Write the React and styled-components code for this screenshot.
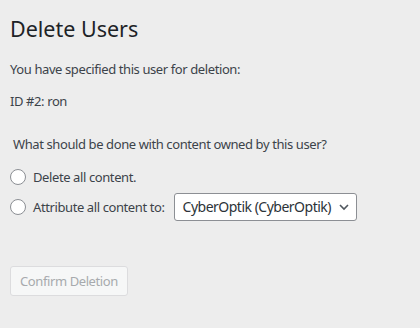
import React from 'react';
import styled, { createGlobalStyle } from 'styled-components';

const Global = createGlobalStyle`
  body {
    margin: 0;
    background: #ededed;
    font-family: "Noto Sans", "Open Sans", sans-serif;
    color: #3c434a;
  }
`;

const Wrap = styled.div`
  padding: 14px 10px 0 10px;
  width: 420px;
  height: 328px;
  box-sizing: border-box;
`;

const Title = styled.h1`
  font-size: 21.5px;
  font-weight: 400;
  color: #1d2327;
  margin: 0 0 16px 0;
  line-height: 30px;
`;

const Text = styled.p`
  font-size: 13px;
  letter-spacing: -0.4px;
  margin: 0 0 ${p => p.gap || 16}px ${p => p.indent || 0}px;
  line-height: 1.5;
`;

const Options = styled.div`
  display: flex;
  flex-direction: column;
  gap: 6px;
`;

const Row = styled.label`
  display: flex;
  align-items: center;
  gap: 7px;
  font-size: 13px;
  letter-spacing: -0.4px;
  height: ${p => p.tall ? 28 : 20}px;
`;

const Radio = styled.span`
  width: 16px;
  height: 16px;
  border: 1px solid #8c8f94;
  border-radius: 50%;
  background: #fff;
  box-sizing: border-box;
  flex: none;
`;

const Select = styled.div`
  display: flex;
  align-items: center;
  gap: 7px;
  height: 28px;
  box-sizing: border-box;
  border: 1px solid #8c8f94;
  border-radius: 3px;
  background: #fff;
  padding: 0 6px 0 8px;
  font-size: 14px;
  letter-spacing: -0.5px;
  color: #2c3338;
  margin-left: 2px;
`;

const Button = styled.button`
  margin-top: 45px;
  height: 30px;
  padding: 0 9px;
  font-family: inherit;
  font-size: 13px;
  letter-spacing: -0.4px;
  color: #a7aaad;
  background: #f6f7f7;
  border: 1px solid #dcdcde;
  border-radius: 3px;
`;

export default function App() {
  return (
    <>
      <Global />
      <Wrap>
        <Title>Delete Users</Title>
        <Text gap={12}>You have specified this user for deletion:</Text>
        <Text gap={24}>ID #2: ron</Text>
        <Text gap={12} indent={3}>What should be done with content owned by this user?</Text>
        <Options>
          <Row>
            <Radio />
            Delete all content.
          </Row>
          <Row tall>
            <Radio />
            Attribute all content to:
            <Select>
              CyberOptik (CyberOptik)
              <svg width="12" height="12" viewBox="0 0 12 12">
                <path d="M2 4l4 4 4-4" fill="none" stroke="#50575e" strokeWidth="1.6" />
              </svg>
            </Select>
          </Row>
        </Options>
        <Button disabled>Confirm Deletion</Button>
      </Wrap>
    </>
  );
}
